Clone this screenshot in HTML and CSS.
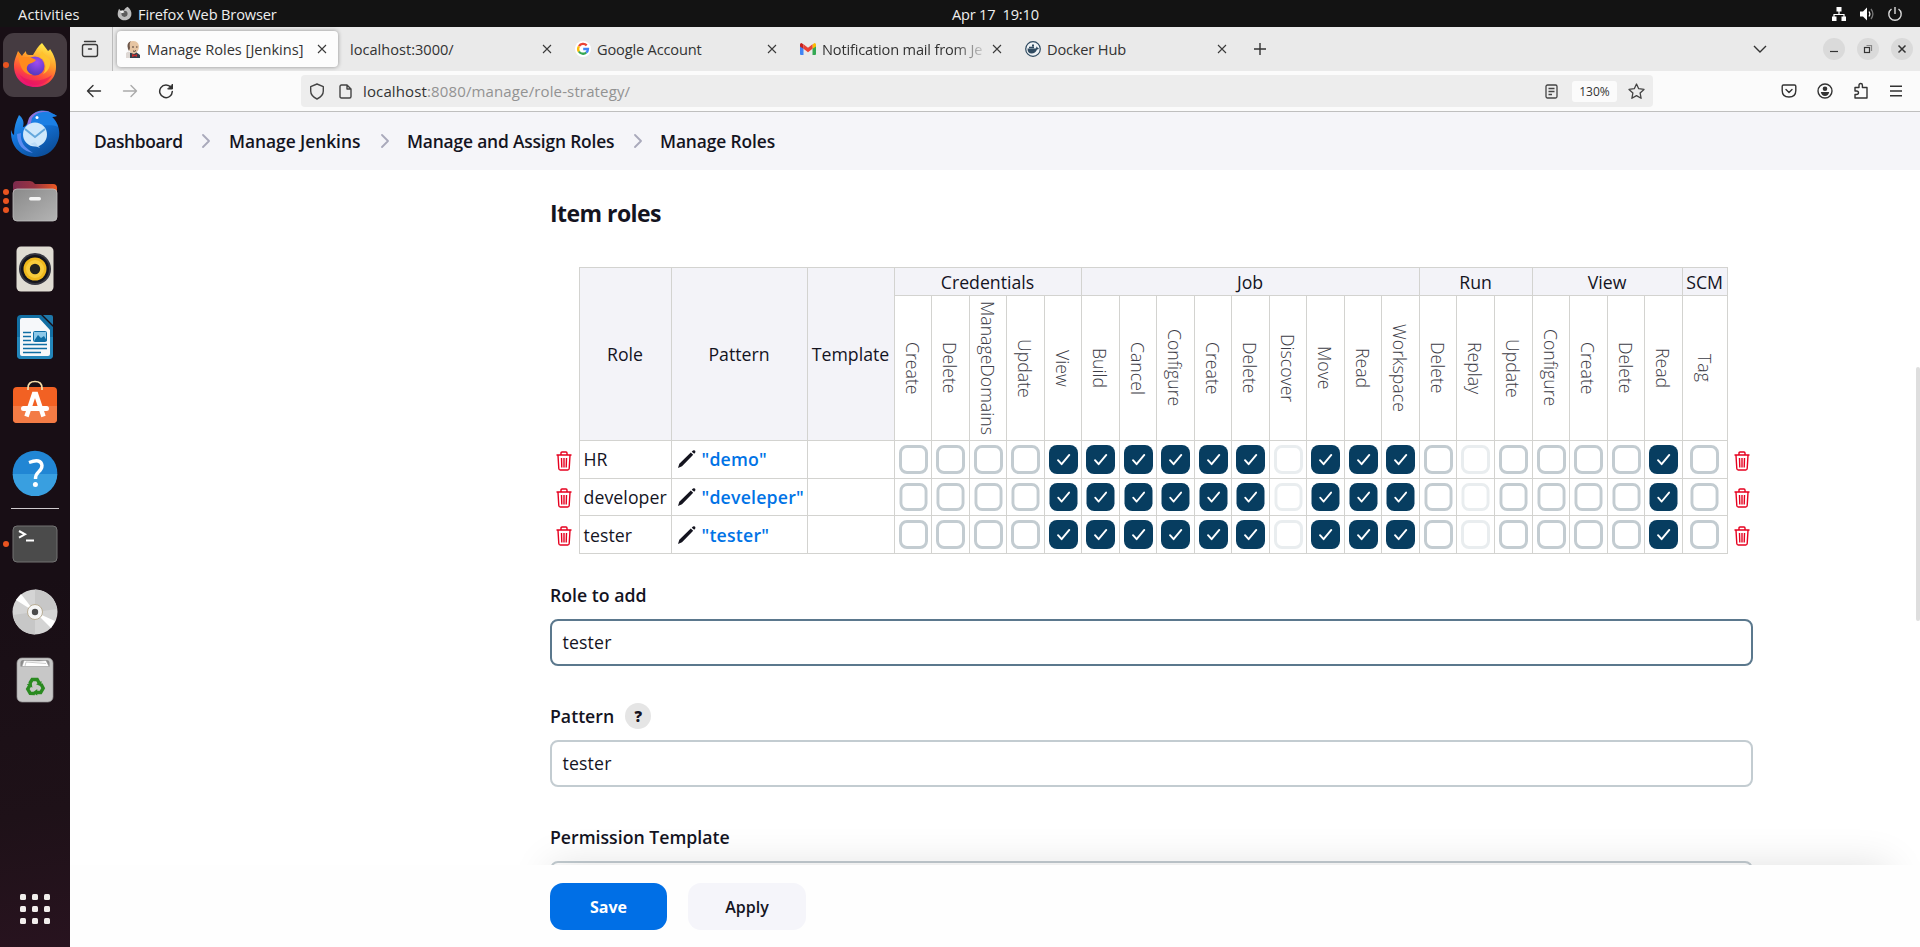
FILE: index.html
```html
<!DOCTYPE html>
<html lang="en">
<head>
<meta charset="utf-8">
<title>Manage Roles [Jenkins]</title>
<link rel="stylesheet" href="styles.css">
</head>
<body>
<svg class="defs" width="0" height="0">
  <defs>
    <linearGradient id="gFire" x1="0.7" y1="0" x2="0.3" y2="1"><stop offset="0" stop-color="#fff04a"/><stop offset=".4" stop-color="#ff9a2a"/><stop offset=".7" stop-color="#ff4a3c"/><stop offset="1" stop-color="#e5097f"/></linearGradient>
    <radialGradient id="gGlobe" cx=".6" cy=".3" r=".8"><stop offset="0" stop-color="#a04cf0"/><stop offset="1" stop-color="#4a35b8"/></radialGradient>
    <linearGradient id="gBird" x1="0" y1="0" x2="0.6" y2="1"><stop offset="0" stop-color="#2f9cf5"/><stop offset=".5" stop-color="#1373d9"/><stop offset="1" stop-color="#0c4f9c"/></linearGradient>
    <linearGradient id="gGrey" x1="0" y1="0" x2="1" y2="1"><stop offset="0" stop-color="#8a8a8a"/><stop offset="1" stop-color="#b4b4b4"/></linearGradient>
    <linearGradient id="gTab"><stop offset="0" stop-color="#7c2b4e"/><stop offset=".5" stop-color="#9b3441"/><stop offset="1" stop-color="#ee5a22"/></linearGradient>
    <symbol id="on" viewBox="0 0 29 29"><rect width="29" height="29" rx="8" fill="#073d60"/><path d="M9 15.200l3.600 4L20.300 9.900" fill="none" stroke="#fff" stroke-width="1.900" stroke-linecap="round" stroke-linejoin="round"/></symbol>
    <symbol id="off" viewBox="0 0 29 29"><rect x="1.500" y="1.500" width="26" height="26" rx="6.500" fill="#fff" stroke="#c3ccd1" stroke-width="3"/></symbol>
    <symbol id="dim" viewBox="0 0 29 29"><rect x="1.500" y="1.500" width="26" height="26" rx="6.500" fill="#fff" stroke="#e9edef" stroke-width="3"/></symbol>
    <symbol id="bin" viewBox="0 0 16 20"><path d="M.5 4h15M5 3.500V2q0-1 1-1h4q1 0 1 1v1.500M2 4.500l.8 13q.1 1.500 1.500 1.500h7.400q1.400 0 1.500-1.500l.8-13M5.500 7l.3 9.500M8 7v9.500M10.500 7l-.3 9.500" fill="none" stroke="#e6001f" stroke-width="1.400"/></symbol>
    <symbol id="pen" viewBox="0 0 18 18"><path d="M0 18l1.300-4.200L12.800 2.500l2.400 2.300L4 16.200zM13.700 1.700L15 .5q1-.7 1.900.1t.2 2.100l-.9 1.100z" fill="#14141f"/></symbol>
    <symbol id="x" viewBox="0 0 10 10"><path d="M1 1l8 8M9 1L1 9" stroke="#3a3a3a" stroke-width="1.100" fill="none"/></symbol>
    <symbol id="chev" viewBox="0 0 8 14"><path d="M1 1l6 6-6 6" fill="none" stroke="#a9a9bb" stroke-width="1.800" stroke-linecap="round" stroke-linejoin="round"/></symbol>
  </defs>
</svg>

<header class="panel">
  <span class="activities">Activities</span>
  <svg class="panel-ff" width="15" height="15" viewBox="0 0 44 44"><path d="M31 2c8 6 13 15 11 25-2 9-10 15-20 15S2 34 2 24C2 18 4 13 6 8l5 6c3-2 6-2 9-1 3-5 6-8 11-11z" fill="#bcbcbc"/><circle cx="22" cy="23" r="9" fill="#5c5c5c"/><path d="M8 16c5-3 11-2 14 2-5 1-6 6-14-2z" fill="#eee"/></svg>
  <span class="app-name">Firefox Web Browser</span>
  <span class="clock">Apr 17&nbsp; 19:10</span>
  <span class="tray">
    <svg width="16" height="16" viewBox="0 0 16 16" fill="#fff"><path d="M5.500 1h5v4.500h-5zM1 10.500h4.500V15H1zM10.500 10.500H15V15h-4.500z"/><path d="M8 5v3M3 11V8.500h10V11" fill="none" stroke="#fff" stroke-width="1.200"/></svg>
    <svg width="16" height="16" viewBox="0 0 16 16"><path d="M1 5.500h3L8 1.500v13L4 10.500H1z" fill="#fff"/><path d="M10 5.500q1.800 2.500 0 5" stroke="#fff" stroke-width="1.200" fill="none"/><path d="M12 3q3.800 5 0 10" stroke="#777" stroke-width="1.300" fill="none"/></svg>
    <svg width="16" height="16" viewBox="0 0 16 16" fill="none" stroke="#ddd" stroke-width="1.400"><path d="M8 1v7M4.500 3a6.200 6.200 0 1 0 7 0"/></svg>
  </span>
</header>

<div class="desktop">
  <nav class="dock">
    <div class="slot current"><span class="dots"><i></i></span>
      <svg width="44" height="44" viewBox="0 0 44 44"><path d="M29 0c2 3 4 5 6 8q2-1 2-2c4 6 6 11 6 18 0 12-9 20-21 20S1 35 1 23c0-6 2-9 4-15l4 5c1-2 3-4 4-5 0 3 1 4 4 4h3c3-5 5-9 9-12z" fill="url(#gFire)"/><circle cx="22" cy="23" r="9.500" fill="url(#gGlobe)"/><path d="M5 9l4 5c4 0 8-1 14 3-2 3-6 3-8 5-3 4 0 8 5 10-8 0-14-6-15-23z" fill="#ff8a1e"/><path d="M27 14c6 3 7 12 3 17 5-2 8-8 7-14-2-4-6-5-8-9q-2 3-2 6z" fill="#ffc22e"/><path d="M6 31c7 8 22 9 33 1-3 6-9 10-17 10-7 0-12-4-16-11z" fill="#e8115f" opacity=".55"/></svg></div>
    <div class="slot">
      <svg class="mail" width="50" height="48" viewBox="0 0 50 48"><path d="M9 5c5 4 5 8 4 12 3 0 6-6 9-11 3-6 14-7 19-3l6 3-5 1c8 7 9 18 5 26C43 42 34 47 25 47 11 47 0 37 1 20c1 2 1 4 3 5 0-8 2-14 5-20z" fill="url(#gBird)"/><path d="M19 8C23 1 35-1 42 3c-5-1-11-1-13 1-4 5-1 8-6 11q-4 2-5 5-2-5 1-12z" fill="#8d73dc"/><path d="M22 8q4-6 12-6 8 0 13 4l-5 1c3 3 5 6 6 10-6-3-12-1-20-2-3 0-6 0-8 2z" fill="#1b7fe4"/><path d="M7 24c0 11 6 17 16 19-9-6-13-11-12-20z" fill="#5b8cf0"/><circle cx="25" cy="24.500" r="12" fill="#cfe8fb"/><path d="M15 19l10 8 10-8" fill="none" stroke="#64a8dc" stroke-width="2"/><path d="M20 34l10 4-5-6z" fill="#bcdcf7"/><circle cx="27" cy="7.500" r="1.500" fill="#fff"/></svg></div>
    <div class="slot"><span class="dots"><i></i><i></i><i></i></span>
      <svg width="46" height="42" viewBox="0 0 46 42"><path d="M1 5q0-4 4-4h13q3 0 5 3h18q4 0 4 4v14H1z" fill="url(#gTab)"/><rect x="1" y="9" width="44" height="32" rx="4" fill="url(#gGrey)" stroke="#c0c0c0" stroke-width=".8"/><rect x="17" y="17" width="12" height="3.500" rx="1.700" fill="#f5f5f5"/></svg></div>
    <div class="slot">
      <svg width="38" height="46" viewBox="0 0 38 46"><rect x=".5" y=".5" width="37" height="45" rx="4.500" fill="#e0dcd3"/><circle cx="19" cy="23" r="16" fill="#35353f"/><circle cx="19" cy="23" r="14" fill="#15151d"/><circle cx="19" cy="23" r="11.500" fill="#f0b81c"/><circle cx="19" cy="23" r="9" fill="#f8cc3c"/><circle cx="19" cy="23" r="5.200" fill="#23231f"/></svg></div>
    <div class="slot">
      <svg width="38" height="46" viewBox="0 0 38 46"><path d="M5 1h20l12 12v28q0 4-4 4H5q-4 0-4-4V5q0-4 4-4z" fill="#126fa3"/><path d="M1 23h36v18q0 4-4 4H5q-4 0-4-4z" fill="#2386ba"/><path d="M4 6q0-2 2-2h17l11 12v24q0 2-2 2H6q-2 0-2-2z" fill="#f6f8fa"/><path d="M27 1h8q2 0 2 2v8z" fill="#1e78aa"/><path d="M7 18.500h8M7 22.500h8M7 26.500h8M7 30.500h24M7 34.500h24M7 38.500h18" stroke="#0f6ea4" stroke-width="1.700"/><rect x="17.500" y="17.500" width="13" height="10" rx="1" fill="#8cc8e8" stroke="#0f6ea4"/><path d="M18 27l4-6 3 3 3-2 3 5z" fill="#0f6ea4"/></svg></div>
    <div class="slot">
      <svg class="bag" width="46" height="44" viewBox="0 0 46 44"><rect x="1" y="7" width="44" height="36" rx="4" fill="#f26123"/><path d="M1 26h44v13q0 4-4 4H5q-4 0-4-4z" fill="#f37b45"/><path d="M16 10V8q0-6.500 7-6.500T30 8v2" fill="none" stroke="#f6dda9" stroke-width="1.700"/><path d="M14.500 36.500L22 14h2l7.500 22.500" fill="none" stroke="#fff" stroke-width="4.500"/><rect x="9" y="26" width="28" height="5" rx="2.500" fill="#fff"/></svg></div>
    <div class="slot">
      <svg width="46" height="46" viewBox="0 0 46 46"><circle cx="23" cy="23" r="22.300" fill="#2186d4"/><path d="M.7 24h44.600A22.300 22.300 0 0 1 .7 24z" fill="#399fe0"/><path d="M17 12.500q12-4.500 13 3 0 3.500-3.500 6.500-3 2.500-3 7" fill="none" stroke="#fff" stroke-width="3.400"/><circle cx="23.400" cy="34.500" r="2.500" fill="#fff"/></svg></div>
    <div class="rule"></div>
    <div class="slot"><span class="dots"><i></i></span>
      <svg width="46" height="38" viewBox="0 0 46 38"><rect x="1" y="1" width="44" height="36" rx="4" fill="#4b4b4b" stroke="#737373"/><path d="M7 6l6 3.300-6 3.300" fill="none" stroke="#fff" stroke-width="2"/><path d="M14 15.500h8" stroke="#fff" stroke-width="2"/></svg></div>
    <div class="slot">
      <svg width="46" height="46" viewBox="0 0 46 46"><circle cx="23" cy="23" r="22.500" fill="#d4d4d4"/><path d="M23 23V.5A22.500 22.500 0 0 1 45 20zM23 23v22.500A22.500 22.500 0 0 1 1 26z" fill="#c7c7c7"/><path d="M23 23L4 11l5-6zM23 23l20 9-4 7z" fill="#fff"/><circle cx="23" cy="23" r="7.500" fill="#f6f6f6" stroke="#b9ad95" stroke-width="1"/><circle cx="23" cy="23" r="3.200" fill="#4b4b4b"/></svg></div>
    <div class="slot">
      <svg width="38" height="46" viewBox="0 0 38 46"><rect x="1" y="1" width="36" height="44" rx="5" fill="#c7c7c7" stroke="#989898" stroke-width=".7"/><path d="M4.500 9.500V6q0-3 3-3h23q3 0 3 3v3.500z" fill="#8d8d8d"/><path d="M6 9.500l2-6 15 .5 7-.5 3 6zM9 9l1-4 20 1.500" fill="#fff" stroke="#999" stroke-width=".5"/><g transform="translate(19.200 30)"><g id="arm"><path d="M-5.500-3.500L-3-7.500h5l2 3.500" fill="none" stroke="#2a8a20" stroke-width="3.400"/><path d="M.8-2.800L6.300-6v5.500z" fill="#2a8a20"/></g><use href="#arm" transform="rotate(120)"/><use href="#arm" transform="rotate(240)"/></g></svg></div>
    <svg class="apps" width="30" height="30" viewBox="0 0 30 30" fill="#f1eeec"><rect width="6" height="6" rx="1.500"/><rect x="12" width="6" height="6" rx="1.500"/><rect x="24" width="6" height="6" rx="1.500"/><rect y="12" width="6" height="6" rx="1.500"/><rect x="12" y="12" width="6" height="6" rx="1.500"/><rect x="24" y="12" width="6" height="6" rx="1.500"/><rect y="24" width="6" height="6" rx="1.500"/><rect x="12" y="24" width="6" height="6" rx="1.500"/><rect x="24" y="24" width="6" height="6" rx="1.500"/></svg>
  </nav>

  <div class="window">
    <div class="tabs">
      <div class="tab-list"><svg width="18" height="18" viewBox="0 0 18 18" fill="none" stroke="#3a3a3a" stroke-width="1.400" stroke-linecap="round"><path d="M3.500 1.500h11"/><rect x="1.500" y="4.500" width="15" height="12" rx="2"/><path d="M7.500 9h3"/></svg></div>
      <div class="tab active">
        <svg width="16" height="17" viewBox="0 0 16 17"><path d="M3 12l-2 4 1 1h13v-3l-4-3z" fill="#333f4c"/><path d="M1 12q3-3 4 0v5H1z" fill="#ded8d4"/><path d="M3 5Q3 0 8 0t6 5q0 6-5 8-5-1-6-8z" fill="#e6c5a3"/><path d="M3 8Q1 2 6 0q-2 2-1 7l-1 3z" fill="#6c5548"/><path d="M7 6h2M11 6h1.500M8 10q2 1 3-.500" stroke="#4c3b32" fill="none"/><path d="M7 13l3 1 2-1v3l-2-1-3 1z" fill="#c82d2d"/></svg>
        <span>Manage Roles [Jenkins]</span><svg class="close"><use href="#x"/></svg></div>
      <div class="tab"><span>localhost:3000/</span><svg class="close"><use href="#x"/></svg></div>
      <div class="tab short"><svg width="16" height="16" viewBox="0 0 16 16"><circle cx="8" cy="8" r="8" fill="#fff"/><g fill="none" stroke-width="2.300"><path d="M4 5.200a4.900 4.900 0 0 1 7.700-.8" stroke="#ea4335"/><path d="M3.900 10.600a5 5 0 0 1 0-5.300" stroke="#fbbc05"/><path d="M11.200 11.600a4.900 4.900 0 0 1-7.300-1.100" stroke="#34a853"/><path d="M8.200 8H13q0 2.300-1.800 3.700" stroke="#4285f4"/></g></svg><span>Google Account</span><svg class="close"><use href="#x"/></svg></div>
      <div class="tab short"><svg width="16" height="12" viewBox="0 0 16 12"><path d="M0 2l3.500 2.600V12H1q-1 0-1-1z" fill="#4285f4"/><path d="M16 2l-3.500 2.600V12H15q1 0 1-1z" fill="#34a853"/><path d="M0 3.500V1.500Q0 0 1.500 0l2 1.500v4.300z" fill="#c5221f"/><path d="M16 3.500V1.500Q16 0 14.500 0l-2 1.500v4.300z" fill="#fbbc04"/><path d="M3.500 1.300L8 4.700l4.500-3.400v4.500L8 9.200 3.500 5.800z" fill="#ea4335"/></svg><span class="fade">Notification mail from Je</span><svg class="close"><use href="#x"/></svg></div>
      <div class="tab short"><svg width="16" height="16" viewBox="0 0 16 16"><circle cx="8" cy="8" r="7.300" fill="#eef2f5" stroke="#2f4a60" stroke-width="1.200"/><path d="M2.500 7.500h8q1 0 .8-2 1.500.5 1.500 1.500l1.200.2q-.5 1.300-2 1.300-1.500 4-5.500 4T2.500 7.500z" fill="#2f4a60"/><path d="M4 5.700h5v1.500H4zM7 3.500h2v2H7z" fill="#2f4a60"/></svg><span>Docker Hub</span><svg class="close"><use href="#x"/></svg></div>
      <svg class="plus" width="14" height="14" viewBox="0 0 14 14" stroke="#333" stroke-width="1.400"><path d="M7 1v12M1 7h12"/></svg>
      <svg class="all-tabs" width="14" height="8" viewBox="0 0 14 8" fill="none" stroke="#333" stroke-width="1.400"><path d="M1 1l6 6 6-6"/></svg>
      <div class="controls">
        <i><svg width="10" height="10" viewBox="0 0 10 10" stroke="#333" stroke-width="1.200"><path d="M1 7.500h8"/></svg></i>
        <i><svg width="10" height="10" viewBox="0 0 10 10" fill="none" stroke="#333" stroke-width="1.200"><rect x="1.500" y="3.500" width="5" height="5"/><path d="M3.500 1.500h5v5.500" stroke="#888"/></svg></i>
        <i><svg width="10" height="10" viewBox="0 0 10 10" stroke="#333" stroke-width="1.500"><path d="M1.500 1.500l7 7M8.500 1.500l-7 7"/></svg></i>
      </div>
    </div>

    <div class="toolbar">
      <div class="nav">
        <svg width="16" height="16" viewBox="0 0 16 16" fill="none" stroke="#333" stroke-width="1.400" stroke-linecap="round" stroke-linejoin="round"><path d="M14.500 8h-13M7 2.500L1.500 8 7 13.500"/></svg>
        <svg width="16" height="16" viewBox="0 0 16 16" fill="none" stroke="#aaa" stroke-width="1.400" stroke-linecap="round" stroke-linejoin="round"><path d="M1.500 8h13M9 2.500L14.500 8 9 13.500"/></svg>
        <svg width="16" height="16" viewBox="0 0 16 16" fill="none" stroke="#333" stroke-width="1.500" stroke-linecap="round"><path d="M13 4.500A6.300 6.300 0 1 0 14.300 8.500"/><path d="M14.500 1.500v4.500H10z" fill="#333" stroke-width="1" stroke-linejoin="round"/></svg>
      </div>
      <div class="url">
        <svg width="16" height="17" viewBox="0 0 16 17" fill="none" stroke="#444" stroke-width="1.400"><path d="M8 1l6.300 2.700V8q0 5-6.300 8Q1.700 13 1.700 8V3.700z" stroke-linejoin="round"/></svg>
        <svg class="doc" width="13" height="15" viewBox="0 0 13 15" fill="none" stroke="#444" stroke-width="1.400" stroke-linejoin="round"><path d="M1 2.500Q1 1 2.500 1H8l4 4v7.500q0 1.500-1.500 1.500h-8Q1 14 1 12.500zM8 1v4h4"/></svg>
        <span class="address">localhost<em>:8080/manage/role-strategy/</em></span>
        <svg class="reader" width="13" height="15" viewBox="0 0 13 15" fill="none" stroke="#444" stroke-width="1.300"><rect x="1" y="1" width="11" height="13" rx="1.500"/><path d="M3.500 4.500h6M3.500 7.500h6M3.500 10.500h3.500"/></svg>
        <span class="zoom">130%</span>
        <svg width="17" height="17" viewBox="0 0 17 17" fill="none" stroke="#444" stroke-width="1.300" stroke-linejoin="round"><path d="M8.500 1l2.200 4.700 5.300.7-3.900 3.500 1 5.400-4.600-2.700-4.600 2.700 1-5.400L1 6.400l5.300-.7z"/></svg>
      </div>
      <div class="tools">
        <svg width="16" height="16" viewBox="0 0 16 16" fill="none" stroke="#333" stroke-width="1.400" stroke-linecap="round" stroke-linejoin="round"><path d="M2.500 2h11q1.300 0 1.300 1.300V7.500Q14.800 14 8 14T1.200 7.500V3.300Q1.200 2 2.500 2zM5 6.500l3 3 3-3"/></svg>
        <svg width="16" height="16" viewBox="0 0 16 16"><circle cx="8" cy="8" r="7" fill="none" stroke="#333" stroke-width="1.400"/><circle cx="8" cy="5.700" r="2.300" fill="#333"/><path d="M3.800 9h8.400q-.8 4-4.200 4T3.800 9z" fill="#333"/></svg>
        <svg width="16" height="18" viewBox="0 0 16 18" fill="none" stroke="#333" stroke-width="1.400" stroke-linejoin="round"><path d="M2 5.500h4V3.200q0-1.700 1.700-1.700t1.700 1.700v2.300H14V16H2v-3.500h1.500q2 0 2-1.700T3.500 9H2z"/></svg>
        <svg width="14" height="14" viewBox="0 0 14 14" stroke="#333" stroke-width="1.400"><path d="M1 2.200h12M1 7h12M1 11.800h12"/></svg>
      </div>
    </div>

    <div class="page">
      <div class="crumbs">
        <a class="c1">Dashboard</a><svg><use href="#chev"/></svg>
        <a class="c2">Manage Jenkins</a><svg><use href="#chev"/></svg>
        <a class="c3">Manage and Assign Roles</a><svg><use href="#chev"/></svg>
        <a class="c4">Manage Roles</a>
      </div>
      <main class="content">
        <h2>Item roles</h2>
        <table class="roles">
          <colgroup><col class="w29"><col class="w92"><col class="w136"><col class="w87"><col class="w37"><col class="w38"><col class="w37"><col class="w38"><col class="w37"><col class="w38"><col class="w37"><col class="w38"><col class="w37"><col class="w38"><col class="w37"><col class="w38"><col class="w37"><col class="w38"><col class="w37"><col class="w38"><col class="w38"><col class="w37"><col class="w38"><col class="w37"><col class="w38"><col class="w45"><col class="w29"></colgroup>
          <tr class="groups"><td class="bare" rowspan="2"></td><th rowspan="2">Role</th><th rowspan="2">Pattern</th><th rowspan="2">Template</th><th colspan="5">Credentials</th><th colspan="9">Job</th><th colspan="3">Run</th><th colspan="4">View</th><th>SCM</th><td class="bare" rowspan="2"></td></tr>
          <tr class="perms"><td><span>Create</span></td><td><span>Delete</span></td><td><span>ManageDomains</span></td><td><span>Update</span></td><td><span>View</span></td><td><span>Build</span></td><td><span>Cancel</span></td><td><span>Configure</span></td><td><span>Create</span></td><td><span>Delete</span></td><td><span>Discover</span></td><td><span>Move</span></td><td><span>Read</span></td><td><span>Workspace</span></td><td><span>Delete</span></td><td><span>Replay</span></td><td><span>Update</span></td><td><span>Configure</span></td><td><span>Create</span></td><td><span>Delete</span></td><td><span>Read</span></td><td><span>Tag</span></td></tr>
          <tr class="r38 first"><td class="bare"><svg class="bin"><use href="#bin"/></svg></td><td class="name">HR</td><td class="pat"><svg class="pen"><use href="#pen"/></svg><a>"demo"</a></td><td></td><td><svg class="cb"><use href="#off"/></svg></td><td><svg class="cb"><use href="#off"/></svg></td><td><svg class="cb"><use href="#off"/></svg></td><td><svg class="cb"><use href="#off"/></svg></td><td><svg class="cb"><use href="#on"/></svg></td><td><svg class="cb"><use href="#on"/></svg></td><td><svg class="cb"><use href="#on"/></svg></td><td><svg class="cb"><use href="#on"/></svg></td><td><svg class="cb"><use href="#on"/></svg></td><td><svg class="cb"><use href="#on"/></svg></td><td><svg class="cb"><use href="#dim"/></svg></td><td><svg class="cb"><use href="#on"/></svg></td><td><svg class="cb"><use href="#on"/></svg></td><td><svg class="cb"><use href="#on"/></svg></td><td><svg class="cb"><use href="#off"/></svg></td><td><svg class="cb"><use href="#dim"/></svg></td><td><svg class="cb"><use href="#off"/></svg></td><td><svg class="cb"><use href="#off"/></svg></td><td><svg class="cb"><use href="#off"/></svg></td><td><svg class="cb"><use href="#off"/></svg></td><td><svg class="cb"><use href="#on"/></svg></td><td><svg class="cb scm"><use href="#off"/></svg></td><td class="bare"><svg class="bin"><use href="#bin"/></svg></td></tr>
          <tr class="r37"><td class="bare"><svg class="bin"><use href="#bin"/></svg></td><td class="name">developer</td><td class="pat"><svg class="pen"><use href="#pen"/></svg><a>"develeper"</a></td><td></td><td><svg class="cb"><use href="#off"/></svg></td><td><svg class="cb"><use href="#off"/></svg></td><td><svg class="cb"><use href="#off"/></svg></td><td><svg class="cb"><use href="#off"/></svg></td><td><svg class="cb"><use href="#on"/></svg></td><td><svg class="cb"><use href="#on"/></svg></td><td><svg class="cb"><use href="#on"/></svg></td><td><svg class="cb"><use href="#on"/></svg></td><td><svg class="cb"><use href="#on"/></svg></td><td><svg class="cb"><use href="#on"/></svg></td><td><svg class="cb"><use href="#dim"/></svg></td><td><svg class="cb"><use href="#on"/></svg></td><td><svg class="cb"><use href="#on"/></svg></td><td><svg class="cb"><use href="#on"/></svg></td><td><svg class="cb"><use href="#off"/></svg></td><td><svg class="cb"><use href="#dim"/></svg></td><td><svg class="cb"><use href="#off"/></svg></td><td><svg class="cb"><use href="#off"/></svg></td><td><svg class="cb"><use href="#off"/></svg></td><td><svg class="cb"><use href="#off"/></svg></td><td><svg class="cb"><use href="#on"/></svg></td><td><svg class="cb scm"><use href="#off"/></svg></td><td class="bare"><svg class="bin"><use href="#bin"/></svg></td></tr>
          <tr class="r38"><td class="bare"><svg class="bin"><use href="#bin"/></svg></td><td class="name">tester</td><td class="pat"><svg class="pen"><use href="#pen"/></svg><a>"tester"</a></td><td></td><td><svg class="cb"><use href="#off"/></svg></td><td><svg class="cb"><use href="#off"/></svg></td><td><svg class="cb"><use href="#off"/></svg></td><td><svg class="cb"><use href="#off"/></svg></td><td><svg class="cb"><use href="#on"/></svg></td><td><svg class="cb"><use href="#on"/></svg></td><td><svg class="cb"><use href="#on"/></svg></td><td><svg class="cb"><use href="#on"/></svg></td><td><svg class="cb"><use href="#on"/></svg></td><td><svg class="cb"><use href="#on"/></svg></td><td><svg class="cb"><use href="#dim"/></svg></td><td><svg class="cb"><use href="#on"/></svg></td><td><svg class="cb"><use href="#on"/></svg></td><td><svg class="cb"><use href="#on"/></svg></td><td><svg class="cb"><use href="#off"/></svg></td><td><svg class="cb"><use href="#dim"/></svg></td><td><svg class="cb"><use href="#off"/></svg></td><td><svg class="cb"><use href="#off"/></svg></td><td><svg class="cb"><use href="#off"/></svg></td><td><svg class="cb"><use href="#off"/></svg></td><td><svg class="cb"><use href="#on"/></svg></td><td><svg class="cb scm"><use href="#off"/></svg></td><td class="bare"><svg class="bin"><use href="#bin"/></svg></td></tr>
        </table>
        <div class="field"><label>Role to add</label><div class="input focus">tester</div></div>
        <div class="field"><label>Pattern <b class="help">?</b></label><div class="input">tester</div></div>
        <div class="field"><label>Permission Template</label><div class="input"></div></div>
      </main>
      <div class="scroll"></div>
      <div class="shade"></div>
      <div class="bottom"><span class="btn save">Save</span><span class="btn apply">Apply</span></div>
    </div>
  </div>
</div>
</body>
</html>
```
FILE: styles.css
```css
* { box-sizing: border-box; }
body {
  margin: 0; width: 1920px; height: 947px; overflow: hidden;
  display: flex; flex-direction: column;
  font-family: "Open Sans", "Noto Sans", sans-serif; color: #14141f; background: #fff;
}
svg { flex: none; display: block; }
.defs { position: absolute; }

/* system panel */
.panel { height: 27px; flex: none; background: #131313; color: #eee; display: flex; align-items: center; font-size: 14.6px; white-space: nowrap; }
.activities { width: 99px; padding-left: 18px; letter-spacing: .15px; }
.panel-ff { margin: 0 6px 0 18px; }
.app-name { width: 814px; letter-spacing: -.15px; }
.clock { width: 879px; letter-spacing: -.2px; }
.tray { display: flex; gap: 12px; }
.desktop { flex: 1; display: flex; min-height: 0; }

/* dock */
.dock { width: 70px; flex: none; background: linear-gradient(170deg, #180e15 0 60%, #1e1118 85%, #28131f); padding: 6px 3px 23px; display: flex; flex-direction: column; align-items: center; gap: 4px; }
.slot { width: 64px; height: 64px; flex: none; position: relative; display: flex; align-items: center; justify-content: center; border-radius: 11px; }
.current { background: #453b41; }
.mail { margin-top: 2px; }
.bag { margin-bottom: 6px; }
.dots { position: absolute; left: 0; top: 0; height: 64px; display: flex; flex-direction: column; justify-content: center; gap: 3px; }
.dots i { width: 6px; height: 6px; border-radius: 50%; background: #e95420; }
.rule { width: 48px; height: 1px; flex: none; background: #cfcacd; margin: -1px 0; }
.apps { margin-top: auto; }

/* browser chrome */
.window { flex: 1; min-width: 0; display: flex; flex-direction: column; }
.tabs { height: 44px; flex: none; background: #eaeaea; display: flex; align-items: center; font-size: 14.6px; color: #333; }
.tab-list { width: 43px; height: 44px; border-right: 1px solid #bcbcbc; display: flex; align-items: center; padding-left: 11px; margin-right: 4px; }
.tab { width: 221px; height: 36px; margin-right: 4px; padding: 0 11px 0 8px; display: flex; align-items: center; gap: 6px; border-radius: 4px; white-space: nowrap; letter-spacing: 0; }
.tab span { flex: 1; min-width: 0; }
.tab.short { letter-spacing: -.17px; }
.tab.active { background: #fcfcfc; box-shadow: 0 0 4px rgba(0,0,0,.4); }
.close { width: 10px; height: 10px; }
.fade { -webkit-mask-image: linear-gradient(90deg, #000 80%, transparent 102%); mask-image: linear-gradient(90deg, #000 80%, transparent 102%); }
.plus { margin-left: 11px; }
.all-tabs { margin-left: 486px; }
.controls { display: flex; gap: 12px; margin-left: 56px; }
.controls i { width: 22px; height: 22px; border-radius: 50%; background: #dadada; display: flex; align-items: center; justify-content: center; }
.toolbar { height: 41px; flex: none; background: #fbfbfb; border-bottom: 1px solid #bfbfbf; display: flex; align-items: center; }
.nav { width: 231px; padding-left: 16px; display: flex; gap: 20px; }
.url { width: 1352px; height: 32px; background: #ededed; border-radius: 4px; padding: 0 8px; display: flex; align-items: center; font-size: 15px; color: #333; }
.doc { margin: 0 11px 0 14px; }
.address { flex: 1; letter-spacing: .13px; }
.address em { font-style: normal; color: #929292; }
.zoom { width: 45px; height: 21px; margin: 0 11px 0 14px; border-radius: 3px; background: #fbfbfb; text-align: center; font-size: 12px; line-height: 21px; }
.tools { margin-left: 128px; display: flex; align-items: center; gap: 20px; }

/* page */
.page { flex: 1; min-height: 0; position: relative; overflow: hidden; background: #fff; }
.crumbs { height: 58px; padding-left: 24px; background: #f5f5f9; display: flex; align-items: center; font-size: 17.4px; font-weight: 600; white-space: nowrap; }
.crumbs svg { width: 8px; height: 14px; }
.c1 { width: 108px; letter-spacing: -.4px; }
.c2 { width: 152px; margin-left: 19px; letter-spacing: -.05px; }
.c3 { width: 227px; margin-left: 18px; letter-spacing: -.18px; }
.c4 { margin-left: 18px; letter-spacing: -.12px; }
.content { padding: 27px 0 0 480px; }
h2 { margin: 0 0 37px; font-size: 23px; line-height: 33px; font-weight: 700; letter-spacing: -.55px; }
.roles { width: 1206px; table-layout: fixed; border-collapse: collapse; font-size: 17.7px; }
.w29 { width: 29px; } .w92 { width: 92px; } .w136 { width: 136px; } .w87 { width: 87px; }
.w37 { width: 37px; } .w38 { width: 38px; } .w45 { width: 45px; }
.roles th, .roles td { border: 1px solid #d3d3d0; padding: 0; white-space: nowrap; }
.roles td.bare { border: 0; }
.roles th { background: #f3f3f8; font-weight: 400; line-height: 24px; letter-spacing: 0; }
.groups { height: 28px; }
.perms { height: 145px; }
.perms span { writing-mode: vertical-rl; font-weight: 300; color: #3c3c46; line-height: 34px; display: block; margin: 0 auto; width: 34px; text-align: center; letter-spacing: 0; }
.r38 { height: 38px; line-height: 24px; }
.r37 { height: 37px; line-height: 24px; }
.roles td.name { padding-left: 4px; letter-spacing: .08px; }
.roles .first .name, .roles .first .pat { padding-bottom: 2px; }
.pat a { color: #0073e6; font-weight: 600; letter-spacing: .2px; }
.pen { width: 18px; height: 18px; display: inline-block; vertical-align: -2px; margin: 0 6px 0 6px; }
.cb { width: 29px; height: 29px; margin: 0 0 0 4px; }
.r37 .cb { height: 28px; }
.cb.scm { margin: 0 auto; }
.bin { width: 16px; height: 20px; margin: 2px 0 0 6px; }
.field { width: 1203px; margin-bottom: 29px; }
.roles + .field { margin-top: 20px; }
label { display: flex; align-items: center; height: 45px; padding-bottom: 3px; font-size: 17.7px; font-weight: 600; letter-spacing: 0; }
.help { width: 26px; height: 26px; margin-left: 11px; border-radius: 50%; background: #e5e5e5; font-size: 15px; line-height: 26px; text-align: center; }
.input { height: 47px; border: 2px solid #c3ccd1; border-radius: 8px; padding: 0 10.500px; font-size: 17.7px; line-height: 43px; letter-spacing: .15px; }
.focus { border-color: #5b788d; }
.scroll { position: absolute; right: 0; top: 255px; width: 4px; height: 254px; background: #dedede; border-radius: 2px; }
.shade { position: absolute; left: 480px; right: 30px; bottom: 0; height: 82px; box-shadow: 0 0 40px rgba(0,0,0,.12); }
.bottom { position: absolute; left: 0; right: 0; bottom: 0; height: 82px; display: flex; gap: 21px; padding: 18px 0 0 480px; background: #fefefe; }
.btn { width: 117px; height: 47px; border-radius: 13px; text-align: center; line-height: 48px; font-size: 16px; font-weight: 700; }
.save { background: #006fe6; color: #fff; }
.apply { width: 118px; background: #f5f5fa; font-weight: 600; }
```
